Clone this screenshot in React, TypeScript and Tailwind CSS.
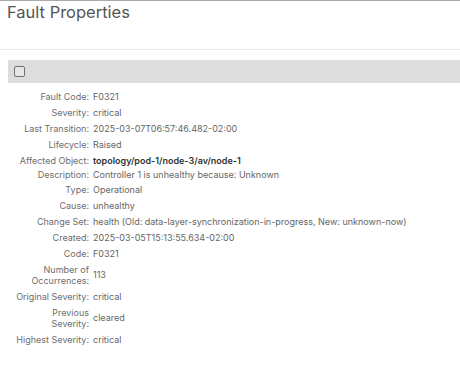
import React from "react";

type Row = { label: React.ReactNode; value: React.ReactNode; bold?: boolean; tight?: boolean };

const rows: Row[] = [
  { label: "Fault Code:", value: "F0321" },
  { label: "Severity:", value: "critical" },
  { label: "Last Transition:", value: "2025-03-07T06:57:46.482-02:00" },
  { label: "Lifecycle:", value: "Raised" },
  { label: "Affected Object:", value: "topology/pod-1/node-3/av/node-1", bold: true },
  { label: "Description:", value: "Controller 1 is unhealthy because: Unknown", tight: true },
  { label: "Type:", value: "Operational" },
  { label: "Cause:", value: "unhealthy" },
  { label: "Change Set:", value: "health (Old: data-layer-synchronization-in-progress, New: unknown-now)" },
  { label: "Created:", value: "2025-03-05T15:13:55.634-02:00" },
  { label: "Code:", value: "F0321" },
  { label: <>Number of<br />Occurrences:</>, value: "113" },
  { label: "Original Severity:", value: "critical" },
  { label: <>Previous<br />Severity:</>, value: "cleared" },
  { label: "Highest Severity:", value: "critical" },
];

export default function App() {
  return (
    <div
      className="w-[460px] h-[378px] bg-white overflow-hidden border-t border-[#aaaaaa]"
      style={{ fontFamily: "Inter, 'Noto Sans', sans-serif" }}
    >
      <div className="h-[49px] border-b border-[#ececec] pl-[7px]">
        <div className="text-[16.5px] leading-[22px] text-[#555555]">Fault Properties</div>
      </div>
      <div className="pl-[8px] pt-[10px]">
        <div className="h-[23px] bg-[#dddddd] flex items-center pl-[6px]">
          <div className="w-[11px] h-[11px] rounded-[2px] border border-[#707070] bg-[#e6e6e6]" />
        </div>
      </div>
      <div className="pt-[5px] text-[9px] leading-[11px] text-[#666666]">
        {rows.map((r, i) => (
          <div key={i} className={`flex items-center ${r.tight ? "py-[1px]" : "py-[2.5px]"}`}>
            <div className="w-[92px] shrink-0 text-right pr-[3px] text-[#6e6e6e] whitespace-nowrap">{r.label}</div>
            <div className={`pl-[1px] whitespace-nowrap ${r.bold ? "font-semibold text-[#333333]" : ""}`}>{r.value}</div>
          </div>
        ))}
      </div>
    </div>
  );
}
